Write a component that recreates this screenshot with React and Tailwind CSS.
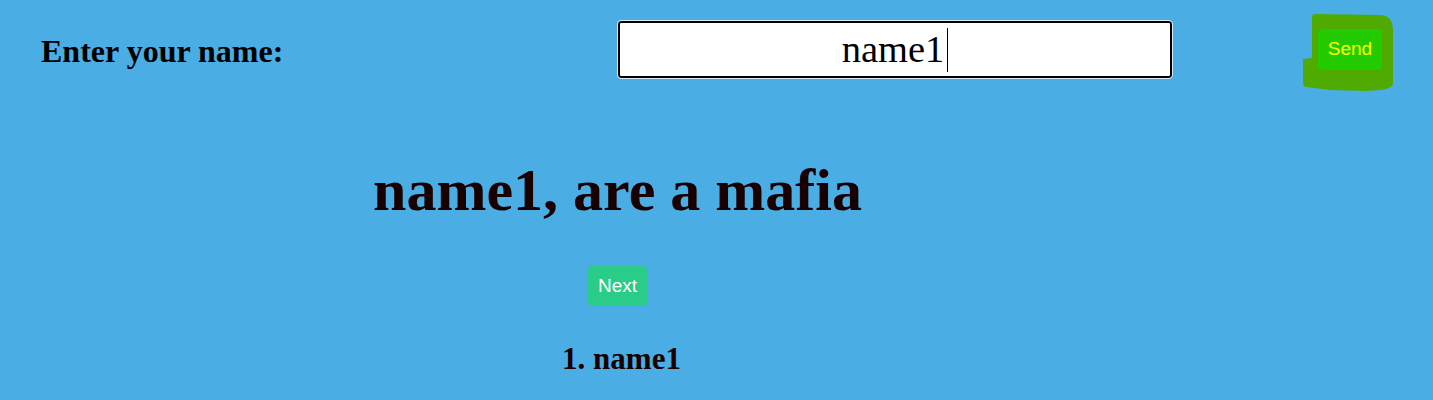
import React, { useState } from 'react';

export default function App() {
  const [name, setName] = useState('name1');

  return (
    <div className="min-h-[400px] w-full bg-[#4aade3] text-[#180000] font-['Liberation_Serif','Times_New_Roman',serif]">
      {/* name form */}
      <div className="flex items-center h-[99px] pl-[41px]">
        <label className="w-[577px] text-[32px] font-bold leading-none text-black pt-[2px]">Enter your name:</label>
        <div className="w-[554px] h-[57px] flex items-center justify-center bg-white border-2 border-black rounded-[3px] outline outline-1 outline-[#dbeaf5]">
          <span className="text-[38.5px] leading-none text-black">{name}</span>
          <span className="w-px h-[44px] bg-black ml-[3px]" />
        </div>
        <div className="relative ml-[146px] w-[64px] h-[41px]">
          <svg className="absolute left-[-15px] top-[-15px]" width="90" height="78" viewBox="0 0 90 78">
            <path d="M9 3 Q9 0 13 0 L78 1 Q90 2 90 17 L90 70 Q89 75 76 76 L62 77 L28 76 L3 73 Q0 72 0 69 L0 45 L9 44 Z" fill="#4fab02" />
          </svg>
          <button
            onClick={() => setName(name)}
            className="relative w-full h-full bg-[#22cc00] rounded-[4px] text-[#ffff00] text-[19px] font-['Liberation_Sans',Arial,sans-serif]"
          >
            Send
          </button>
        </div>
      </div>

      {/* result */}
      <div className="w-[1235px] flex flex-col items-center">
        <h1 className="mt-[61px] text-[60px] font-bold leading-[60px]">{name}, are a mafia</h1>
        <button className="mt-[46px] w-[59px] h-[40px] bg-[#29cc88] rounded-[4px] text-white text-[19px] font-['Liberation_Sans',Arial,sans-serif]">
          Next
        </button>
        <ol className="mt-[37px] ml-[8px] text-[31px] font-bold leading-none">
          <li>1. {name}</li>
        </ol>
      </div>
    </div>
  );
}
